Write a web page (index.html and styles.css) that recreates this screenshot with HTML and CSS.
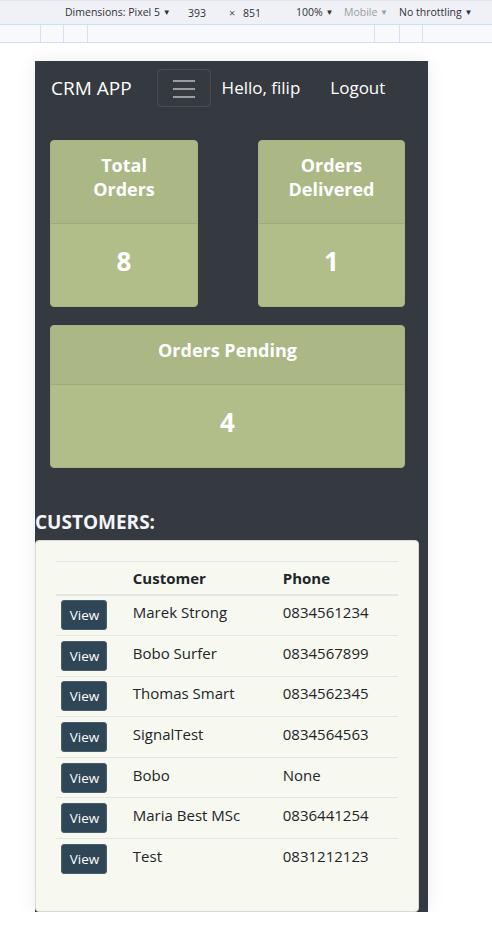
FILE: index.html
```html
<!DOCTYPE html>
<html lang="en">
<head>
<meta charset="utf-8">
<title>CRM APP</title>
<link rel="stylesheet" href="styles.css">
</head>
<body>
<div class="devbar">
  <span class="dv">Dimensions: Pixel 5 <span class="tri">▼</span></span>
  <span class="dv">393</span>
  <span class="dv times">×</span>
  <span class="dv">851</span>
  <span class="dv">100% <span class="tri">▼</span></span>
  <span class="dv muted">Mobile <span class="tri">▼</span></span>
  <span class="dv">No throttling <span class="tri">▼</span></span>
</div>
<div class="ruler">
  <span class="seg s1"></span><span class="seg s2"></span><span class="seg s3"></span><span class="seg s4"></span><span class="seg s5"></span><span class="seg s6"></span><span class="seg s7"></span>
</div>
<div class="stage">
  <div class="phone">
    <nav class="navbar">
      <span class="brand">CRM APP</span>
      <span class="toggler">
        <svg width="30" height="30" viewBox="0 0 30 30"><path d="M4 8h22M4 16h22M4 24h22" stroke="rgba(255,255,255,0.5)" stroke-width="2" stroke-linecap="butt"/></svg>
      </span>
      <span class="navlink hello">Hello, filip</span>
      <span class="navlink logout">Logout</span>
    </nav>

    <div class="stats">
      <div class="stat">
        <div class="stat-head"><h5>Total<br>Orders</h5></div>
        <div class="stat-body"><h3>8</h3></div>
      </div>
      <div class="stat">
        <div class="stat-head"><h5>Orders<br>Delivered</h5></div>
        <div class="stat-body"><h3>1</h3></div>
      </div>
      <div class="stat wide">
        <div class="stat-head"><h5>Orders Pending</h5></div>
        <div class="stat-body"><h3>4</h3></div>
      </div>
    </div>

    <h5 class="section-title">CUSTOMERS:</h5>
    <div class="cust-card">
      <table class="cust-table">
        <colgroup><col class="c1"><col class="c2"><col class="c3"></colgroup>
        <thead>
          <tr><th></th><th>Customer</th><th>Phone</th></tr>
        </thead>
        <tbody>
          <tr><td><span class="btn">View</span></td><td>Marek Strong</td><td>0834561234</td></tr>
          <tr><td><span class="btn">View</span></td><td>Bobo Surfer</td><td>0834567899</td></tr>
          <tr><td><span class="btn">View</span></td><td>Thomas Smart</td><td>0834562345</td></tr>
          <tr><td><span class="btn">View</span></td><td>SignalTest</td><td>0834564563</td></tr>
          <tr><td><span class="btn">View</span></td><td>Bobo</td><td>None</td></tr>
          <tr><td><span class="btn">View</span></td><td>Maria Best MSc</td><td>0836441254</td></tr>
          <tr><td><span class="btn">View</span></td><td>Test</td><td>0831212123</td></tr>
        </tbody>
      </table>
    </div>
  </div>
</div>
</body>
</html>
```

FILE: styles.css
```css
* { box-sizing: border-box; }

html, body {
  margin: 0;
  padding: 0;
  background: #ffffff;
  font-family: "Open Sans", "Noto Sans", sans-serif;
}

/* ---------- devtools toolbar ---------- */
.devbar {
  height: 25px;
  background: #eff1f6;
  border-top: 1px solid #e2e4e9;
  border-bottom: 1px solid #cddff6;
  display: grid;
  grid-template-columns: 123px 41px 14px 53px 48px 55px auto;
  align-items: center;
  padding-left: 65px;
  font-size: 10.5px;
  color: #303236;
  white-space: nowrap;
}
.dv { line-height: 14px; }
.tri { font-size: 8px; position: relative; top: -1px; }
.muted { color: #9a9ca0; }
.times { font-size: 11px; color: #555; }

.ruler {
  height: 18px;
  background: #f7f9fd;
  border-bottom: 1px solid #cddff6;
  display: flex;
}
.seg { height: 100%; border-right: 1px solid #d3e2f6; }
.s1 { width: 41px; }
.s2 { width: 23px; }
.s3 { width: 24px; }
.s4 { width: 287px; }
.s5 { width: 25px; }
.s6 { width: 23px; }
.s7 { flex: 1; border-right: none; }

/* ---------- emulated phone ---------- */
.stage {
  padding: 18px 0 0 35px;
}
.phone {
  width: 393px;
  height: 851px;
  background: #343a40;
  display: flex;
  flex-direction: column;
  overflow: hidden;
  box-shadow: 0 0 18px rgba(0, 0, 0, 0.08);
}

.navbar {
  height: 54px;
  padding: 8px 16px;
  display: flex;
  align-items: center;
  color: #ffffff;
}
.brand {
  font-size: 19px;
  line-height: 24px;
  margin-right: 25px;
}
.toggler {
  width: 54px;
  height: 38px;
  border: 1px solid rgba(255, 255, 255, 0.1);
  border-radius: 4px;
  display: flex;
  align-items: center;
  justify-content: center;
}
.toggler svg { display: block; }
.navlink {
  font-size: 17px;
  line-height: 24px;
  color: #ffffff;
}
.hello { margin-left: 11px; }
.logout { margin-left: 30px; }

/* ---------- stat cards ---------- */
.stats {
  margin: 25px 23px 0 15px;
  display: grid;
  grid-template-columns: 148px 147px;
  justify-content: space-between;
  row-gap: 18px;
}
.stat {
  background: #b1be8a;
  border: 1px solid #a7b382;
  border-radius: 4px;
  overflow: hidden;
  color: #ffffff;
  text-align: center;
}
.stat.wide { grid-column: 1 / -1; }
.stat-head {
  background: #abb785;
  border-bottom: 1px solid #9eab78;
  padding: 12px 8px 14px;
}
.stat-head h5 {
  margin: 0 0 8px;
  font-size: 18px;
  line-height: 24px;
  font-weight: 700;
}
.stat-body {
  padding: 20px 8px;
}
.stat-body h3 {
  margin: 0 0 8px;
  font-size: 26px;
  line-height: 34px;
  font-weight: 700;
}

/* ---------- customers ---------- */
.section-title {
  margin: 42px 0 6px;
  font-size: 19px;
  line-height: 24px;
  font-weight: 700;
  color: #f3f5f8;
}
.cust-card {
  flex: 1;
  margin-right: 9px;
  background: #f7f8f0;
  border: 1px solid #d9dad3;
  border-radius: 4px;
  padding: 20px;
}
.cust-table {
  width: 100%;
  border-collapse: collapse;
  color: #212529;
  font-size: 15px;
}
.c1 { width: 72px; }
.c2 { width: 150px; }
.cust-table th,
.cust-table td {
  padding: 4.8px;
  line-height: 24px;
  text-align: left;
  vertical-align: top;
}
.cust-table th {
  padding-top: 4px;
  padding-bottom: 3.5px;
  font-weight: 700;
  border-top: 1px solid #e2e5e9;
  border-bottom: 2px solid #e2e5e9;
}
.cust-table td {
  border-top: 1px solid #e2e5e9;
}
.btn {
  display: inline-block;
  height: 30px;
  padding: 4px 8px;
  line-height: 20px;
  font-size: 13.5px;
  color: #ffffff;
  background: #2e4656;
  border: 1px solid #4a5d6a;
  border-radius: 3px;
  vertical-align: top;
  width: 46px;
  text-align: center;
}
```
